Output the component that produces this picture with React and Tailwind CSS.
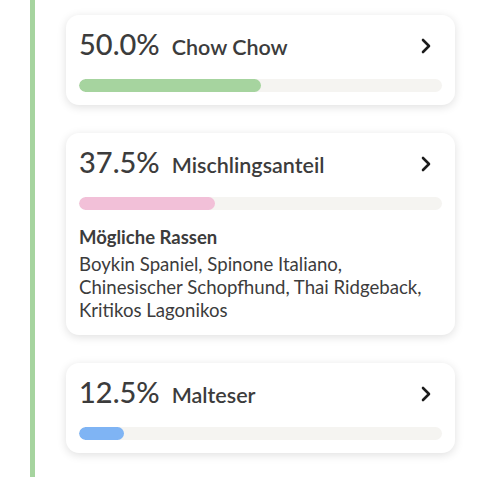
import React from "react";

const breeds = [
  { pct: "50.0%", name: "Chow Chow", value: 50, color: "bg-[#a6d49f]" },
  {
    pct: "37.5%",
    name: "Mischlingsanteil",
    value: 37.5,
    color: "bg-[#f2c0d8]",
    possible:
      "Boykin Spaniel, Spinone Italiano, Chinesischer Schopfhund, Thai Ridgeback, Kritikos Lagonikos",
  },
  { pct: "12.5%", name: "Malteser", value: 12.5, color: "bg-[#7fb4f4]" },
];

function Chevron() {
  return (
    <svg width="12" height="16" viewBox="0 0 12 16" fill="none" className="mr-[10px]">
      <path d="M3 2l6 6-6 6" stroke="#1c1c1c" strokeWidth="2.6" strokeLinecap="round" strokeLinejoin="round" />
    </svg>
  );
}

function BreedCard({ breed }) {
  return (
    <div className="bg-white rounded-[13px] shadow-[0_2px_10px_rgba(0,0,0,0.13)] pt-[16px] pb-[13px] px-[13px]">
      <div className="flex items-center justify-between h-[29px]">
        <div className="flex items-baseline gap-[12px]">
          <span className="text-[29px] leading-[29px] font-medium text-[#3c3c3c]">{breed.pct}</span>
          <span className="text-[21.5px] leading-[29px] font-semibold text-[#3c3c3c]">{breed.name}</span>
        </div>
        <Chevron />
      </div>
      <div className="mt-[19px] h-[13px] rounded-full bg-[#f5f4f1] overflow-hidden">
        <div className={`h-full rounded-full ${breed.color}`} style={{ width: `${breed.value}%` }} />
      </div>
      {breed.possible && (
        <div className="mt-[16px] text-[#3c3c3c]">
          <div className="text-[18.5px] leading-[23px] font-bold">Mögliche Rassen</div>
          <p className="mt-[4px] text-[18.6px] leading-[23px]">{breed.possible}</p>
        </div>
      )}
    </div>
  );
}

export default function App() {
  return (
    <div
      className="min-h-screen bg-white flex pl-[30px]"
      style={{ fontFamily: "Lato, 'Noto Sans', sans-serif" }}
    >
      <div className="w-[5px] self-stretch bg-[#a6d49f]" />
      <div className="flex-1 ml-[31px] mr-[27px] pt-[15px] flex flex-col gap-[28px]">
        {breeds.map((b) => (
          <BreedCard key={b.name} breed={b} />
        ))}
      </div>
    </div>
  );
}
